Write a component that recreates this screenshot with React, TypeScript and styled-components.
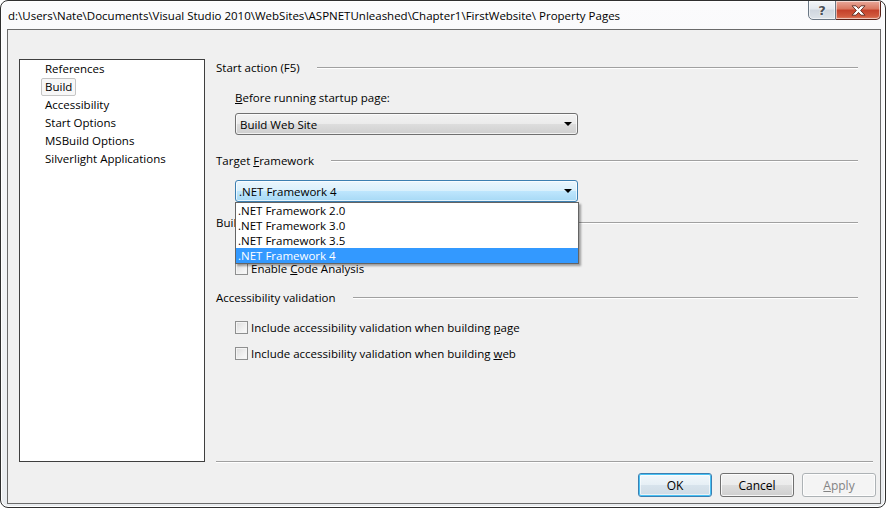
import styled, { createGlobalStyle } from "styled-components";

const GlobalStyle = createGlobalStyle`
  html, body {
    margin: 0;
    padding: 0;
    background: #ffffff;
  }
  body {
    font-family: "Open Sans", "Liberation Sans", sans-serif;
    font-size: 11.5px;
    color: #000;
  }
  * {
    box-sizing: border-box;
  }
`;

const Window = styled.div`
  width: 886px;
  height: 508px;
  border: 1px solid #2f2f2f;
  border-radius: 8px;
  background: linear-gradient(180deg, #fbfbfc 0%, #f1f3f5 60%, #e9ecef 100%);
  box-shadow: inset 0 0 0 1px #ffffff;
  display: flex;
  flex-direction: column;
  overflow: hidden;
`;

const TitleBar = styled.div`
  height: 28px;
  display: flex;
  align-items: flex-start;
  padding: 0 4px 0 7px;
`;

const Title = styled.div`
  flex: 1;
  line-height: 29px;
  font-size: 11.5px;
  color: #000;
  text-shadow: 0 0 6px rgba(255, 255, 255, 0.9);
  white-space: nowrap;
`;

const Caption = styled.div`
  display: flex;
  margin-top: -1px;
`;

const CaptionButton = styled.div<{ $close?: boolean }>`
  width: ${(p) => (p.$close ? "45px" : "28px")};
  height: 20px;
  display: flex;
  align-items: center;
  justify-content: center;
  border: 1px solid ${(p) => (p.$close ? "#5a2218" : "#6a7784")};
  border-left-width: ${(p) => (p.$close ? "0" : "1px")};
  border-radius: ${(p) => (p.$close ? "0 0 5px 0" : "0 0 0 5px")};
  background: ${(p) =>
    p.$close
      ? "linear-gradient(180deg, #e9a99b 0%, #d9775f 45%, #c4402a 50%, #d15a3e 85%, #e1846a 100%)"
      : "linear-gradient(180deg, #f4f6f8 0%, #e3e8ee 45%, #cfd6de 50%, #dde3e9 100%)"};
  box-shadow: inset 0 0 0 1px rgba(255, 255, 255, 0.55);
`;

const HelpGlyph = styled.span`
  font-family: "DejaVu Sans", sans-serif;
  font-weight: bold;
  font-size: 13px;
  color: #4a4f55;
  text-shadow: 0 0 2px #fff, 0 0 1px #fff;
  line-height: 1;
`;

const Client = styled.div`
  height: 475px;
  margin: 0 4px 0 6px;
  border: 1px solid #6a6a6a;
  background: #f0f0f0;
  display: flex;
  flex-direction: column;
`;

const Body = styled.div`
  display: flex;
  gap: 11px;
  padding: 29px 0 0 11px;
`;

const ListBox = styled.div`
  width: 186px;
  height: 403px;
  border: 1px solid #3f3f3f;
  background: #fff;
  padding-left: 21px;
  display: flex;
  flex-direction: column;
  align-items: flex-start;
`;

const ListItem = styled.span<{ $selected?: boolean }>`
  line-height: 16px;
  padding: 0 3px;
  border: 1px solid ${(p) => (p.$selected ? "#c5c5c5" : "transparent")};
  border-radius: 2px;
  background: ${(p) => (p.$selected ? "#f7f7f7" : "transparent")};
`;

const Content = styled.div`
  flex: 1;
  height: 403px;
  padding-right: 7px;
  display: flex;
  flex-direction: column;
`;

const Header = styled.div<{ $mt: number }>`
  display: flex;
  align-items: center;
  gap: 17px;
  height: 16px;
  margin-top: ${(p) => p.$mt}px;
  margin-right: 15px;
  white-space: nowrap;
`;

const Rule = styled.div`
  flex: 1;
  height: 1px;
  background: #a0a0a0;
  box-shadow: 0 1px 0 #ffffff;
`;

const Row = styled.div<{ $mt: number }>`
  display: flex;
  align-items: center;
  gap: 3px;
  height: 16px;
  margin-top: ${(p) => p.$mt}px;
  padding-left: 19px;
  white-space: nowrap;
`;

const ComboWrap = styled.div<{ $mt: number }>`
  position: relative;
  width: 343px;
  margin: ${(p) => p.$mt}px 0 0 19px;
`;

const Combo = styled.div<{ $hot?: boolean }>`
  height: 22px;
  display: flex;
  align-items: center;
  justify-content: space-between;
  padding: 0 5px 0 ${(p) => (p.$hot ? "3px" : "4px")};
  border: 1px solid ${(p) => (p.$hot ? "#3c7fb1" : "#707070")};
  border-radius: 3px;
  background: ${(p) =>
    p.$hot
      ? "linear-gradient(180deg, #eaf6fd 0%, #d9f0fc 50%, #bee6fd 51%, #a7d9f5 100%)"
      : "linear-gradient(180deg, #f2f2f2 0%, #ebebeb 50%, #dddddd 51%, #cfcfcf 100%)"};
  box-shadow: inset 0 0 0 1px rgba(255, 255, 255, 0.7);
`;

const Arrow = styled.span`
  width: 0;
  height: 0;
  border-left: 4px solid transparent;
  border-right: 4px solid transparent;
  border-top: 4px solid #000;
`;

const DropList = styled.div`
  position: absolute;
  top: 100%;
  left: 0;
  width: 344px;
  border: 1px solid #646464;
  background: #fff;
  padding: 0;
  box-shadow: 2px 2px 2px rgba(0, 0, 0, 0.35);
  z-index: 2;
`;

const DropItem = styled.div<{ $selected?: boolean }>`
  height: 15px;
  line-height: 15px;
  padding-left: 2px;
  background: ${(p) => (p.$selected ? "#3399ff" : "transparent")};
  color: ${(p) => (p.$selected ? "#fff" : "#000")};
`;

const CheckBox = styled.span`
  width: 13px;
  height: 13px;
  flex: none;
  border: 1px solid #8e8f8f;
  background: linear-gradient(135deg, #dcdcdc 0%, #f0f0f0 60%, #fbfbfb 100%);
  box-shadow: inset 0 0 0 1px #f4f4f4;
`;

const Separator = styled.div`
  margin-top: auto;
  height: 1px;
  background: #a0a0a0;
  box-shadow: 0 1px 0 #ffffff;
`;

const Footer = styled.div`
  display: flex;
  justify-content: flex-end;
  gap: 8px;
  padding: 11px 4px 0 0;
`;

const Button = styled.button<{ $variant?: "default" | "disabled" }>`
  width: 74px;
  height: 24px;
  padding: 0;
  font: inherit;
  font-size: 12px;
  border-radius: 3px;
  border: 1px solid
    ${(p) =>
      p.$variant === "default" ? "#3c7fb1" : p.$variant === "disabled" ? "#adb2b5" : "#707070"};
  color: ${(p) => (p.$variant === "disabled" ? "#838383" : "#000")};
  background: ${(p) =>
    p.$variant === "disabled"
      ? "#f4f4f4"
      : p.$variant === "default"
      ? "linear-gradient(180deg, #f2f8fc 0%, #e6eff5 50%, #d7e3ec 51%, #cfdbe5 100%)"
      : "linear-gradient(180deg, #f2f2f2 0%, #ebebeb 50%, #dddddd 51%, #cfcfcf 100%)"};
  box-shadow: ${(p) =>
    p.$variant === "default"
      ? "inset 0 0 0 1px #48c2f5, inset 0 0 0 2px rgba(255,255,255,0.6)"
      : "inset 0 0 0 1px rgba(255,255,255,0.8)"};
`;

const CloseIcon = () => (
  <svg width="15" height="11" viewBox="0 0 15 11">
    <path
      d="M1 0.8 H5 L7.5 3.6 L10 0.8 H14 L9.6 5.5 L14 10.2 H10 L7.5 7.4 L5 10.2 H1 L5.4 5.5 Z"
      fill="#ffffff"
      stroke="#5b2a20"
      strokeWidth="0.9"
      strokeLinejoin="round"
    />
  </svg>
);

const pages = ["References", "Build", "Accessibility", "Start Options", "MSBuild Options", "Silverlight Applications"];

const frameworks = [".NET Framework 2.0", ".NET Framework 3.0", ".NET Framework 3.5", ".NET Framework 4"];

export default function App() {
  return (
    <>
      <GlobalStyle />
      <Window>
        <TitleBar>
          <Title>
            d:\Users\Nate\Documents\Visual Studio 2010\WebSites\ASPNETUnleashed\Chapter1\FirstWebsite\ Property Pages
          </Title>
          <Caption>
            <CaptionButton>
              <HelpGlyph>?</HelpGlyph>
            </CaptionButton>
            <CaptionButton $close>
              <CloseIcon />
            </CaptionButton>
          </Caption>
        </TitleBar>
        <Client>
          <Body>
            <ListBox>
              {pages.map((p) => (
                <ListItem key={p} $selected={p === "Build"}>
                  {p}
                </ListItem>
              ))}
            </ListBox>
            <Content>
              <Header $mt={0}>
                Start action (F5)
                <Rule />
              </Header>
              <Row $mt={14}>
                <span>
                  <u>B</u>efore running startup page:
                </span>
              </Row>
              <ComboWrap $mt={8}>
                <Combo>
                  Build Web Site
                  <Arrow />
                </Combo>
              </ComboWrap>
              <Header $mt={17}>
                <span>
                  Target <u>F</u>ramework
                </span>
                <Rule />
              </Header>
              <ComboWrap $mt={12}>
                <Combo $hot>
                  .NET Framework 4
                  <Arrow />
                </Combo>
                <DropList>
                  {frameworks.map((f, i) => (
                    <DropItem key={f} $selected={i === frameworks.length - 1}>
                      {f}
                    </DropItem>
                  ))}
                </DropList>
              </ComboWrap>
              <Header $mt={12}>
                Build
                <Rule />
              </Header>
              <Row $mt={30}>
                <CheckBox />
                <span>
                  Enable <u>C</u>ode Analysis
                </span>
              </Row>
              <Header $mt={13}>
                Accessibility validation
                <Rule />
              </Header>
              <Row $mt={14}>
                <CheckBox />
                <span>
                  Include accessibility validation when building <u>p</u>age
                </span>
              </Row>
              <Row $mt={10}>
                <CheckBox />
                <span>
                  Include accessibility validation when building <u>w</u>eb
                </span>
              </Row>
              <Separator />
            </Content>
          </Body>
          <Footer>
            <Button $variant="default">OK</Button>
            <Button>Cancel</Button>
            <Button $variant="disabled">
              <u>A</u>pply
            </Button>
          </Footer>
        </Client>
      </Window>
    </>
  );
}
